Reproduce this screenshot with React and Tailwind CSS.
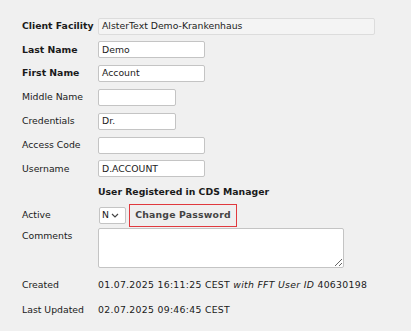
export default function App() {
  const font = "font-['DejaVu_Sans',Verdana,sans-serif]"

  const Label = ({ children, bold }) => (
    <div className={`w-[76px] shrink-0 ${bold ? "font-bold" : ""}`}>{children}</div>
  )

  const Input = ({ value, w }) => (
    <div
      className={`${w} h-[17px] bg-white border border-[#c4c4c4] rounded-[2px] px-[3px] flex items-center text-[#222]`}
    >
      {value}
    </div>
  )

  const rows = [
    { label: "Last Name", bold: true, value: "Demo", w: "w-[107px]", h: "h-[23px]" },
    { label: "First Name", bold: true, value: "Account", w: "w-[107px]", h: "h-[24px]" },
    { label: "Middle Name", value: "", w: "w-[78px]", h: "h-[24px]" },
    { label: "Credentials", value: "Dr.", w: "w-[78px]", h: "h-[24px]" },
    { label: "Access Code", value: "", w: "w-[107px]", h: "h-[24px]" },
    { label: "Username", value: "D.ACCOUNT", w: "w-[107px]", h: "h-[23px]" },
  ]

  return (
    <div className={`w-[411px] h-[331px] bg-[#f0f0f0] text-[9.3px] text-[#1a1a1a] ${font} pl-[22px] pt-[14px]`}>
      <div className="flex items-center h-[24px]">
        <Label bold>Client Facility</Label>
        <div className="w-[277px] h-[17px] bg-[#f4f4f4] border border-[#dcdcdc] rounded-[2px] px-[3px] flex items-center text-[#222]">
          AlsterText Demo-Krankenhaus
        </div>
      </div>

      {rows.map((r) => (
        <div key={r.label} className={`flex items-center ${r.h}`}>
          <Label bold={r.bold}>{r.label}</Label>
          <Input value={r.value} w={r.w} />
        </div>
      ))}

      <div className="flex items-center h-[23px]">
        <Label />
        <div className="font-bold">User Registered in CDS Manager</div>
      </div>

      <div className="flex items-center h-[24px]">
        <Label>Active</Label>
        <div className="ml-[1px] w-[27px] h-[17px] bg-white border border-[#c4c4c4] rounded-[2px] flex items-center pl-[2px] gap-[2px]">
          <span>N</span>
          <svg width="8" height="5" viewBox="0 0 8 5" fill="none">
            <path d="M1 1l3 3 3-3" stroke="#444" strokeWidth="1.2" />
          </svg>
        </div>
        <div className="ml-[3px] w-[108px] h-[23px] border border-[#e0393e] bg-[#efefef] flex items-center justify-center font-bold text-[#444] tracking-[0.2px]">
          Change Password
        </div>
      </div>

      <div className="flex h-[45px] pt-[1px]">
        <div className="w-[76px] shrink-0 pt-[1px]">Comments</div>
        <textarea
          className="w-[246px] h-[40px] bg-white border border-[#c4c4c4] rounded-[2px] outline-none"
          readOnly
        />
      </div>

      <div className="flex items-center h-[25px] pt-[1px]">
        <Label>Created</Label>
        <div className="tracking-[0.3px]">
          01.07.2025 16:11:25 CEST <span className="italic">with FFT User ID</span> 40630198
        </div>
      </div>

      <div className="flex items-center h-[25px]">
        <Label>Last Updated</Label>
        <div className="tracking-[0.3px]">02.07.2025 09:46:45 CEST</div>
      </div>
    </div>
  )
}
